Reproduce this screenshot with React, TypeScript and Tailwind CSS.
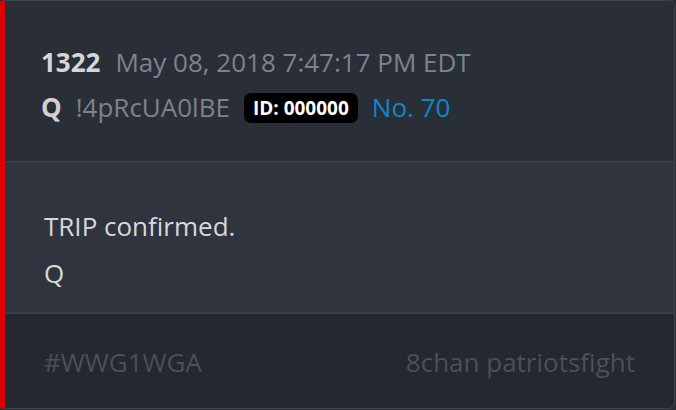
export default function App() {
  return (
    <div className="w-[676px] h-[410px] bg-[#2a2e36] font-['Open_Sans',sans-serif]">
      <div className="w-[675px] h-[409px] flex flex-col overflow-hidden rounded-r-[7px] rounded-l-[3px] border border-[#3d424c] border-l-[5px] border-l-[#dd0000]">
        <header className="bg-[#2a2e36] pl-[36px] pt-[39px] pb-[31px] border-b-2 border-[#3a3f49]">
          <div className="flex items-center gap-[15px] leading-[45px] text-[26px]">
            <span className="font-bold text-[#d6d6d6]">1322</span>
            <span className="text-[#7d8291]">May 08, 2018 7:47:17 PM EDT</span>
          </div>
          <div className="flex items-center gap-[14px] leading-[45px] text-[26px]">
            <span className="font-bold text-[#d0d0d0]">Q</span>
            <span className="text-[#7d8291]">!4pRcUA0lBE</span>
            <span className="bg-black text-white font-bold text-[19px] leading-[30px] px-[9px] rounded-[7px]">
              ID: 000000
            </span>
            <span className="text-[#0a88cc]">No. 70</span>
          </div>
        </header>
        <section className="bg-[#2f343e] pl-[39px] pt-[41px] pb-[16px] text-[26px] leading-[45px] text-[#d8d8d8] border-b-2 border-[#3a3f49]">
          <p>TRIP confirmed.</p>
          <p className="mt-[2px]">Q</p>
        </section>
        <footer className="flex-1 bg-[#25282f] flex justify-between pl-[39px] pr-[39px] pt-[26px] text-[26px] leading-[45px] text-[#4a4f5b]">
          <span>#WWG1WGA</span>
          <span>8chan patriotsfight</span>
        </footer>
      </div>
    </div>
  )
}
